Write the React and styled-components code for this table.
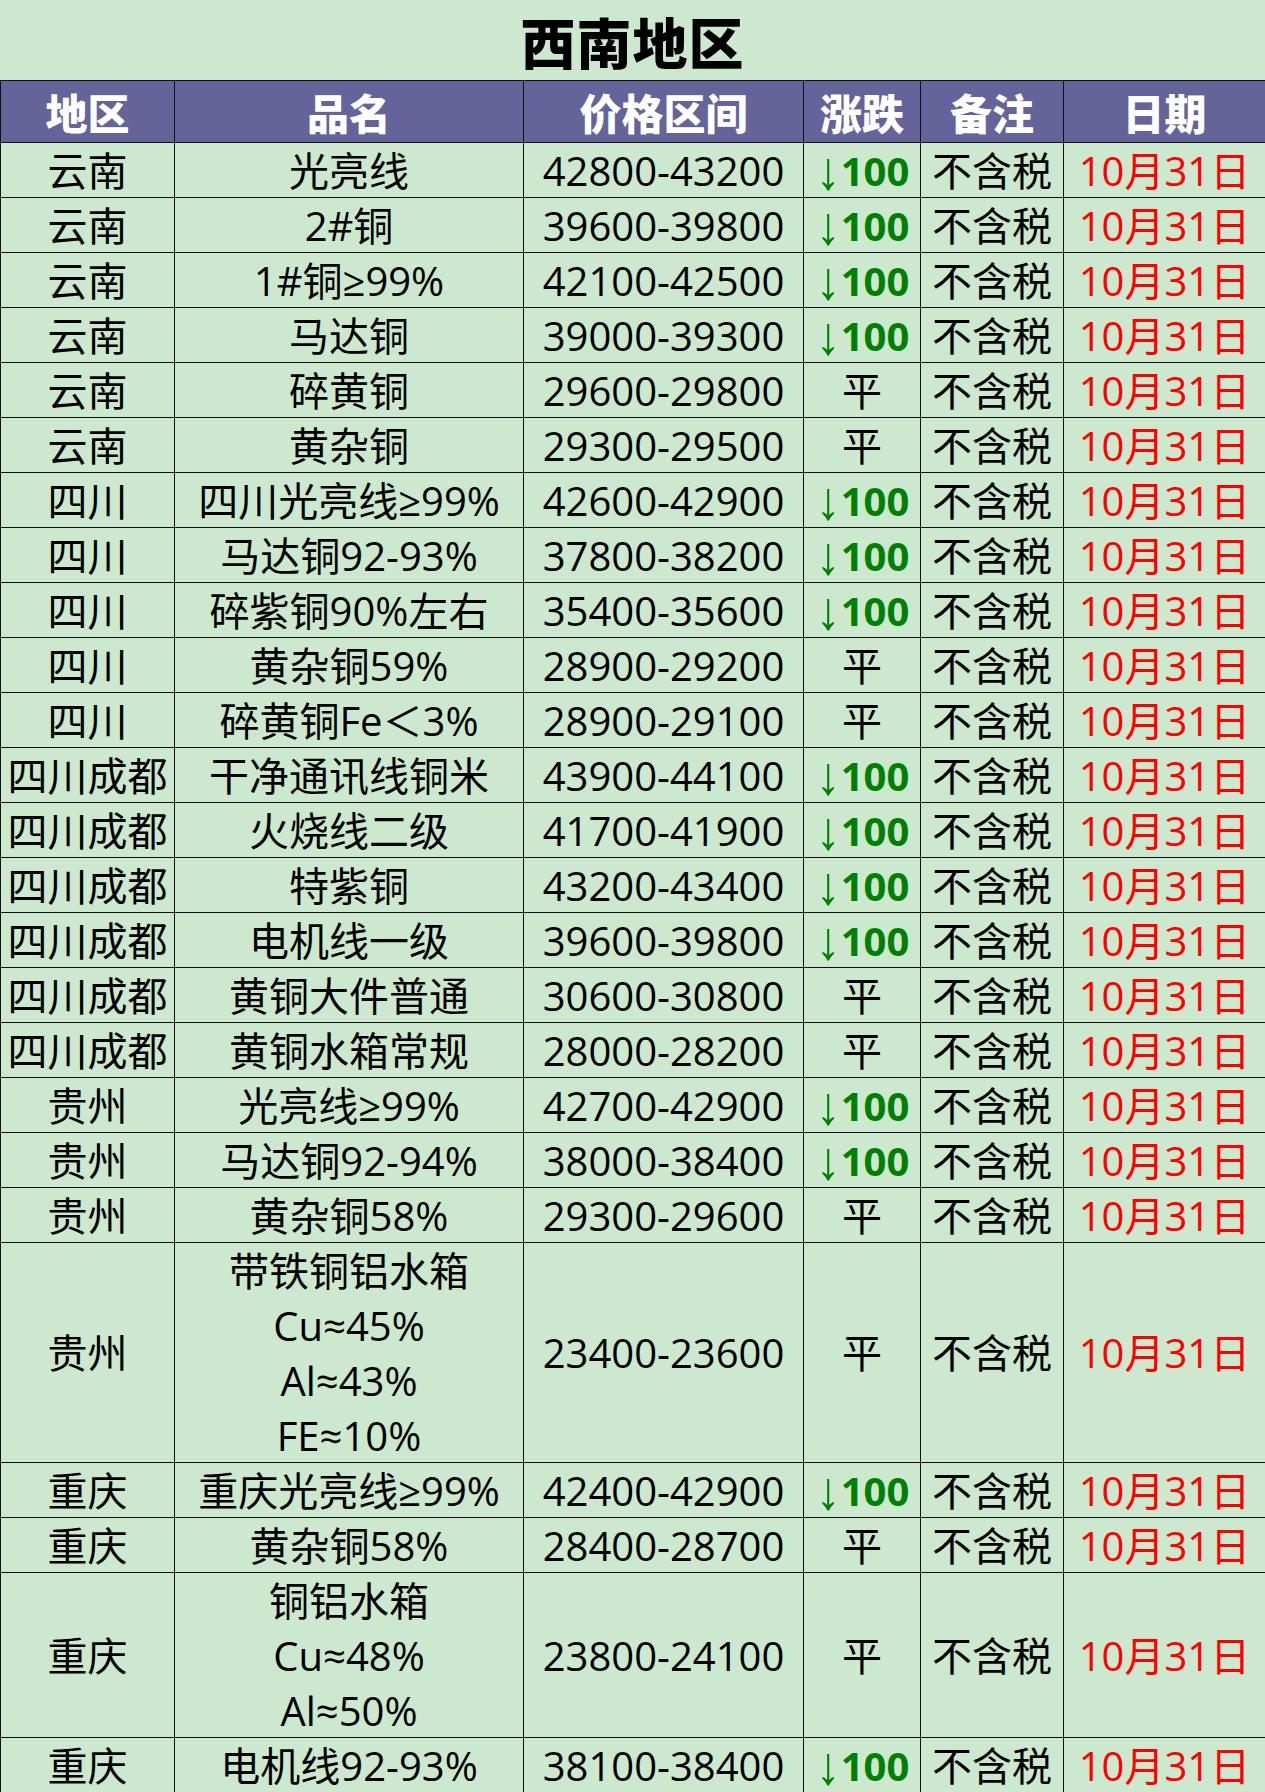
import styled, { createGlobalStyle } from 'styled-components';

const GlobalStyle = createGlobalStyle`
    html, body {
        margin: 0;
        padding: 0;
        background: #cce8cf;
    }
    * {
        box-sizing: border-box;
    }
`

const FONT = `"Open Sans", "Noto Sans CJK SC", sans-serif`
const ROW_H = 55

const Page = styled.div`
    width: 1265px;
    background: #cce8cf;
    font-family: ${FONT};
    color: #000;
`

const Title = styled.div`
    height: 80px;
    display: flex;
    align-items: center;
    justify-content: center;
    font-size: 55px;
    font-weight: 900;
    letter-spacing: 1px;
`

const Grid = styled.div`
    display: grid;
    grid-template-columns: 174px 349px 280px 117px 143px 202px;
    border-top: 1.5px solid #111;
    border-left: 1.5px solid #111;
`

const HeadCell = styled.div`
    height: 62px;
    display: flex;
    align-items: center;
    justify-content: center;
    background: #64649a;
    color: #fff;
    font-size: 42px;
    font-weight: 900;
    border-right: 1.5px solid #111;
    border-bottom: 1.5px solid #111;
`

const Cell = styled.div`
    height: ${({ $lines }) => $lines * ROW_H}px;
    display: flex;
    flex-direction: column;
    align-items: center;
    justify-content: center;
    font-size: 40px;
    line-height: ${ROW_H}px;
    white-space: nowrap;
    color: ${({ $color }) => $color || '#000'};
    border-right: 1.5px solid #111;
    border-bottom: 1.5px solid #111;
`

const Down = styled.span`
    color: #008000;
    font-weight: 700;
    display: inline-flex;
    align-items: baseline;
    line-height: 44px;

    .arrow {
        font-family: "Liberation Sans", sans-serif;
        font-weight: 400;
        font-size: 54px;
        line-height: 40px;
        margin-right: -1px;
        transform: translateY(3px) scaleX(0.9);
    }
`

const headers = ['地区', '品名', '价格区间', '涨跌', '备注', '日期']

const rows = [
    ['云南', ['光亮线'], '42800-43200', true],
    ['云南', ['2#铜'], '39600-39800', true],
    ['云南', ['1#铜≥99%'], '42100-42500', true],
    ['云南', ['马达铜'], '39000-39300', true],
    ['云南', ['碎黄铜'], '29600-29800', false],
    ['云南', ['黄杂铜'], '29300-29500', false],
    ['四川', ['四川光亮线≥99%'], '42600-42900', true],
    ['四川', ['马达铜92-93%'], '37800-38200', true],
    ['四川', ['碎紫铜90%左右'], '35400-35600', true],
    ['四川', ['黄杂铜59%'], '28900-29200', false],
    ['四川', ['碎黄铜Fe＜3%'], '28900-29100', false],
    ['四川成都', ['干净通讯线铜米'], '43900-44100', true],
    ['四川成都', ['火烧线二级'], '41700-41900', true],
    ['四川成都', ['特紫铜'], '43200-43400', true],
    ['四川成都', ['电机线一级'], '39600-39800', true],
    ['四川成都', ['黄铜大件普通'], '30600-30800', false],
    ['四川成都', ['黄铜水箱常规'], '28000-28200', false],
    ['贵州', ['光亮线≥99%'], '42700-42900', true],
    ['贵州', ['马达铜92-94%'], '38000-38400', true],
    ['贵州', ['黄杂铜58%'], '29300-29600', false],
    ['贵州', ['带铁铜铝水箱', 'Cu≈45%', 'Al≈43%', 'FE≈10%'], '23400-23600', false],
    ['重庆', ['重庆光亮线≥99%'], '42400-42900', true],
    ['重庆', ['黄杂铜58%'], '28400-28700', false],
    ['重庆', ['铜铝水箱', 'Cu≈48%', 'Al≈50%'], '23800-24100', false],
    ['重庆', ['电机线92-93%'], '38100-38400', true],
]

const App = () => {
    return (
        <>
            <GlobalStyle />
            <Page>
                <Title>西南地区</Title>
                <Grid>
                    {headers.map(h => <HeadCell key={h}>{h}</HeadCell>)}
                    {rows.map(([region, name, price, down], i) => {
                        const lines = name.length
                        return [
                            <Cell key={`r${i}`} $lines={lines}>{region}</Cell>,
                            <Cell key={`n${i}`} $lines={lines}>
                                {name.map(line => <div key={line}>{line}</div>)}
                            </Cell>,
                            <Cell key={`p${i}`} $lines={lines}>{price}</Cell>,
                            <Cell key={`c${i}`} $lines={lines}>
                                {down
                                    ? <Down><span className="arrow">↓</span>100</Down>
                                    : '平'}
                            </Cell>,
                            <Cell key={`t${i}`} $lines={lines}>不含税</Cell>,
                            <Cell key={`d${i}`} $lines={lines} $color="#ff0000">10月31日</Cell>,
                        ]
                    })}
                </Grid>
            </Page>
        </>
    );
}

export default App
